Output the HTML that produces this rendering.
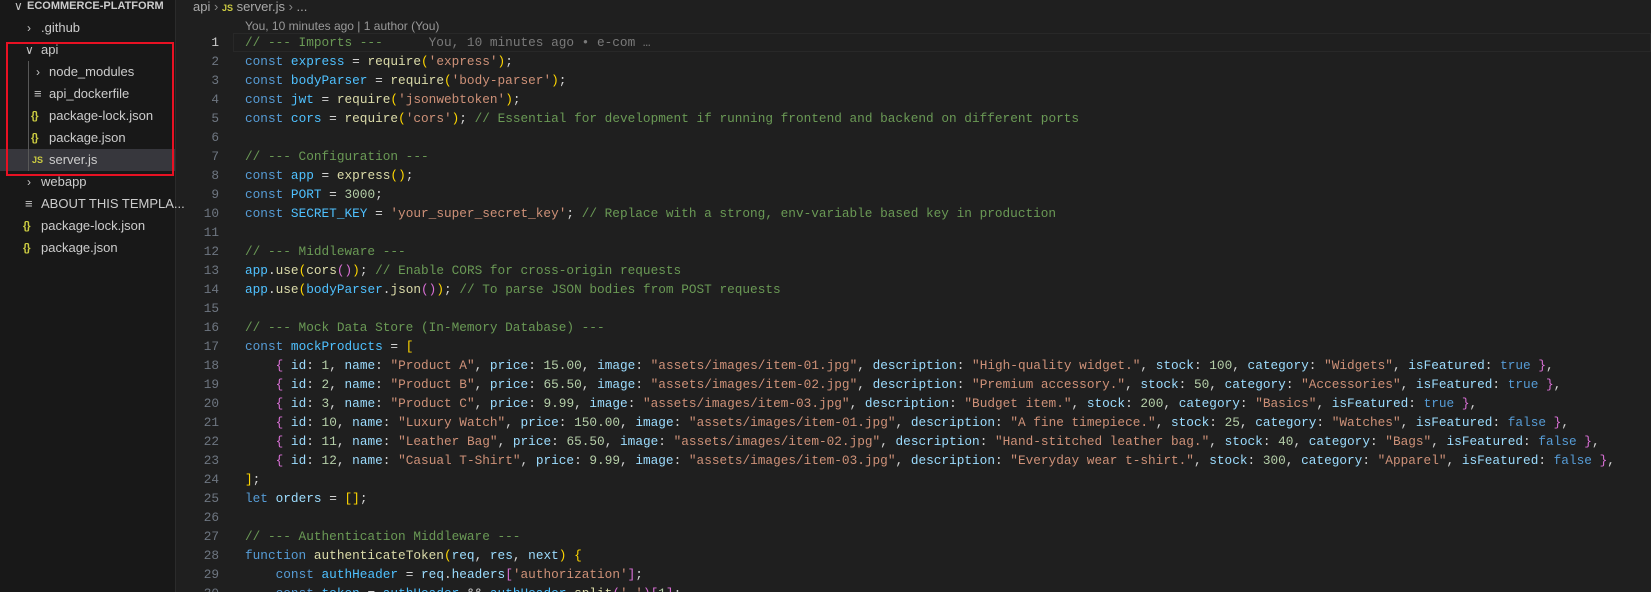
<!DOCTYPE html>
<html><head><meta charset="utf-8"><style>
*{margin:0;padding:0;box-sizing:border-box}
html,body{width:1651px;height:592px;overflow:hidden}
body{background:#1f1f1f;font-family:"Liberation Sans",sans-serif;position:relative}
#side{position:absolute;left:0;top:0;width:176px;height:592px;background:#181818;border-right:1px solid #2b2b2b;color:#cccccc;font-size:13px}
.row{position:absolute;left:0;width:175px;height:22px;line-height:22px;white-space:nowrap}
.row span{position:absolute}
.chev{color:#c5c5c5;font-size:12px}
.json{color:#cbcb41;font-weight:bold;font-size:11px;letter-spacing:-1px}
.js{color:#cbcb41;font-weight:bold;font-size:9px}
.doc{color:#c5c5c5;font-size:13px}
#red{position:absolute;left:6px;top:42px;width:168px;height:134px;border:2px solid #e81123}
#guide{position:absolute;left:28px;top:61px;width:1px;height:110px;background:#585858}
#crumb{position:absolute;left:193px;top:0;height:16px;line-height:14px;font-size:13px;color:#a9a9a9;white-space:nowrap}
#lens{position:absolute;left:245px;top:17px;font-size:12px;color:#999;line-height:18px;white-space:nowrap}
#code{position:absolute;left:0;top:33px;width:1651px;font-family:"Liberation Mono",monospace;font-size:12.75px}
.l{position:relative;height:19px;line-height:19px}
.n{position:absolute;left:178px;width:41px;text-align:right;color:#6e7681}
.c{position:absolute;left:245px;color:#d4d4d4;white-space:pre}
.k{color:#569cd6}.v{color:#4fc1ff}.p{color:#9cdcfe}.s{color:#ce9178}.num{color:#b5cea8}.cm{color:#6a9955}.f{color:#dcdcaa}
.b1{color:#ffd700}.b2{color:#da70d6}.b3{color:#179fff}.gh{color:#7a7a7a}
#cur{position:absolute;left:233px;top:33px;width:1418px;height:19px;border:1px solid #282828}
</style></head><body>
<div id="side">
<div class="row" style="top:-5px"><span class="chev" style="left:14px">∨</span><span style="left:27px;font-weight:bold;font-size:11px">ECOMMERCE-PLATFORM</span></div>
<div class="row" style="top:17px"><span class="chev" style="left:27px">›</span><span style="left:41px">.github</span></div>
<div class="row" style="top:39px"><span class="chev" style="left:25px">∨</span><span style="left:41px">api</span></div>
<div class="row" style="top:61px"><span class="chev" style="left:36px">›</span><span style="left:49px">node_modules</span></div>
<div class="row" style="top:83px"><span class="doc" style="left:34px">≡</span><span style="left:49px">api_dockerfile</span></div>
<div class="row" style="top:105px"><span class="json" style="left:31px">{}</span><span style="left:49px">package-lock.json</span></div>
<div class="row" style="top:127px"><span class="json" style="left:31px">{}</span><span style="left:49px">package.json</span></div>
<div class="row" style="top:149px;background:#37373d"><span class="js" style="left:32px">JS</span><span style="left:49px">server.js</span></div>
<div class="row" style="top:171px"><span class="chev" style="left:27px">›</span><span style="left:41px">webapp</span></div>
<div class="row" style="top:193px"><span class="doc" style="left:25px">≡</span><span style="left:41px">ABOUT THIS TEMPLA...</span></div>
<div class="row" style="top:215px"><span class="json" style="left:23px">{}</span><span style="left:41px">package-lock.json</span></div>
<div class="row" style="top:237px"><span class="json" style="left:23px">{}</span><span style="left:41px">package.json</span></div>
<div id="guide"></div>
<div id="red"></div>
</div>
<div id="crumb">api <span style="color:#888">›</span> <span style="color:#cbcb41;font-weight:bold;font-size:9px">JS</span> server.js <span style="color:#888">›</span> ...</div>
<div id="lens">You, 10 minutes ago | 1 author (You)</div>
<div id="cur"></div>
<div id="code"><div class="l"><span class="n" style="color:#ccc">1</span><span class="c"><span class="cm">// --- Imports ---</span>      <span class="gh">You, 10 minutes ago • e-com …</span></span></div><div class="l"><span class="n">2</span><span class="c"><span class="k">const</span> <span class="v">express</span> = <span class="f">require</span><span class="b1">(</span><span class="s">'express'</span><span class="b1">)</span>;</span></div><div class="l"><span class="n">3</span><span class="c"><span class="k">const</span> <span class="v">bodyParser</span> = <span class="f">require</span><span class="b1">(</span><span class="s">'body-parser'</span><span class="b1">)</span>;</span></div><div class="l"><span class="n">4</span><span class="c"><span class="k">const</span> <span class="v">jwt</span> = <span class="f">require</span><span class="b1">(</span><span class="s">'jsonwebtoken'</span><span class="b1">)</span>;</span></div><div class="l"><span class="n">5</span><span class="c"><span class="k">const</span> <span class="v">cors</span> = <span class="f">require</span><span class="b1">(</span><span class="s">'cors'</span><span class="b1">)</span>; <span class="cm">// Essential for development if running frontend and backend on different ports</span></span></div><div class="l"><span class="n">6</span></div><div class="l"><span class="n">7</span><span class="c"><span class="cm">// --- Configuration ---</span></span></div><div class="l"><span class="n">8</span><span class="c"><span class="k">const</span> <span class="v">app</span> = <span class="f">express</span><span class="b1">()</span>;</span></div><div class="l"><span class="n">9</span><span class="c"><span class="k">const</span> <span class="v">PORT</span> = <span class="num">3000</span>;</span></div><div class="l"><span class="n">10</span><span class="c"><span class="k">const</span> <span class="v">SECRET_KEY</span> = <span class="s">'your_super_secret_key'</span>; <span class="cm">// Replace with a strong, env-variable based key in production</span></span></div><div class="l"><span class="n">11</span></div><div class="l"><span class="n">12</span><span class="c"><span class="cm">// --- Middleware ---</span></span></div><div class="l"><span class="n">13</span><span class="c"><span class="v">app</span>.<span class="f">use</span><span class="b1">(</span><span class="f">cors</span><span class="b2">()</span><span class="b1">)</span>; <span class="cm">// Enable CORS for cross-origin requests</span></span></div><div class="l"><span class="n">14</span><span class="c"><span class="v">app</span>.<span class="f">use</span><span class="b1">(</span><span class="v">bodyParser</span>.<span class="f">json</span><span class="b2">()</span><span class="b1">)</span>; <span class="cm">// To parse JSON bodies from POST requests</span></span></div><div class="l"><span class="n">15</span></div><div class="l"><span class="n">16</span><span class="c"><span class="cm">// --- Mock Data Store (In-Memory Database) ---</span></span></div><div class="l"><span class="n">17</span><span class="c"><span class="k">const</span> <span class="v">mockProducts</span> = <span class="b1">[</span></span></div><div class="l"><span class="n">18</span><span class="c">    <span class="b2">{</span> <span class="p">id</span>: <span class="num">1</span>, <span class="p">name</span>: <span class="s">"Product A"</span>, <span class="p">price</span>: <span class="num">15.00</span>, <span class="p">image</span>: <span class="s">"assets/images/item-01.jpg"</span>, <span class="p">description</span>: <span class="s">"High-quality widget."</span>, <span class="p">stock</span>: <span class="num">100</span>, <span class="p">category</span>: <span class="s">"Widgets"</span>, <span class="p">isFeatured</span>: <span class="k">true</span> <span class="b2">}</span>,</span></div><div class="l"><span class="n">19</span><span class="c">    <span class="b2">{</span> <span class="p">id</span>: <span class="num">2</span>, <span class="p">name</span>: <span class="s">"Product B"</span>, <span class="p">price</span>: <span class="num">65.50</span>, <span class="p">image</span>: <span class="s">"assets/images/item-02.jpg"</span>, <span class="p">description</span>: <span class="s">"Premium accessory."</span>, <span class="p">stock</span>: <span class="num">50</span>, <span class="p">category</span>: <span class="s">"Accessories"</span>, <span class="p">isFeatured</span>: <span class="k">true</span> <span class="b2">}</span>,</span></div><div class="l"><span class="n">20</span><span class="c">    <span class="b2">{</span> <span class="p">id</span>: <span class="num">3</span>, <span class="p">name</span>: <span class="s">"Product C"</span>, <span class="p">price</span>: <span class="num">9.99</span>, <span class="p">image</span>: <span class="s">"assets/images/item-03.jpg"</span>, <span class="p">description</span>: <span class="s">"Budget item."</span>, <span class="p">stock</span>: <span class="num">200</span>, <span class="p">category</span>: <span class="s">"Basics"</span>, <span class="p">isFeatured</span>: <span class="k">true</span> <span class="b2">}</span>,</span></div><div class="l"><span class="n">21</span><span class="c">    <span class="b2">{</span> <span class="p">id</span>: <span class="num">10</span>, <span class="p">name</span>: <span class="s">"Luxury Watch"</span>, <span class="p">price</span>: <span class="num">150.00</span>, <span class="p">image</span>: <span class="s">"assets/images/item-01.jpg"</span>, <span class="p">description</span>: <span class="s">"A fine timepiece."</span>, <span class="p">stock</span>: <span class="num">25</span>, <span class="p">category</span>: <span class="s">"Watches"</span>, <span class="p">isFeatured</span>: <span class="k">false</span> <span class="b2">}</span>,</span></div><div class="l"><span class="n">22</span><span class="c">    <span class="b2">{</span> <span class="p">id</span>: <span class="num">11</span>, <span class="p">name</span>: <span class="s">"Leather Bag"</span>, <span class="p">price</span>: <span class="num">65.50</span>, <span class="p">image</span>: <span class="s">"assets/images/item-02.jpg"</span>, <span class="p">description</span>: <span class="s">"Hand-stitched leather bag."</span>, <span class="p">stock</span>: <span class="num">40</span>, <span class="p">category</span>: <span class="s">"Bags"</span>, <span class="p">isFeatured</span>: <span class="k">false</span> <span class="b2">}</span>,</span></div><div class="l"><span class="n">23</span><span class="c">    <span class="b2">{</span> <span class="p">id</span>: <span class="num">12</span>, <span class="p">name</span>: <span class="s">"Casual T-Shirt"</span>, <span class="p">price</span>: <span class="num">9.99</span>, <span class="p">image</span>: <span class="s">"assets/images/item-03.jpg"</span>, <span class="p">description</span>: <span class="s">"Everyday wear t-shirt."</span>, <span class="p">stock</span>: <span class="num">300</span>, <span class="p">category</span>: <span class="s">"Apparel"</span>, <span class="p">isFeatured</span>: <span class="k">false</span> <span class="b2">}</span>,</span></div><div class="l"><span class="n">24</span><span class="c"><span class="b1">]</span>;</span></div><div class="l"><span class="n">25</span><span class="c"><span class="k">let</span> <span class="p">orders</span> = <span class="b1">[]</span>;</span></div><div class="l"><span class="n">26</span></div><div class="l"><span class="n">27</span><span class="c"><span class="cm">// --- Authentication Middleware ---</span></span></div><div class="l"><span class="n">28</span><span class="c"><span class="k">function</span> <span class="f">authenticateToken</span><span class="b1">(</span><span class="p">req</span>, <span class="p">res</span>, <span class="p">next</span><span class="b1">)</span> <span class="b1">{</span></span></div><div class="l"><span class="n">29</span><span class="c">    <span class="k">const</span> <span class="v">authHeader</span> = <span class="p">req</span>.<span class="p">headers</span><span class="b2">[</span><span class="s">'authorization'</span><span class="b2">]</span>;</span></div><div class="l"><span class="n">30</span><span class="c">    <span class="k">const</span> <span class="v">token</span> = <span class="v">authHeader</span> &amp;&amp; <span class="v">authHeader</span>.<span class="f">split</span><span class="b2">(</span><span class="s">' '</span><span class="b2">)</span><span class="b2">[</span><span class="num">1</span><span class="b2">]</span>;</span></div></div>
</body></html>
